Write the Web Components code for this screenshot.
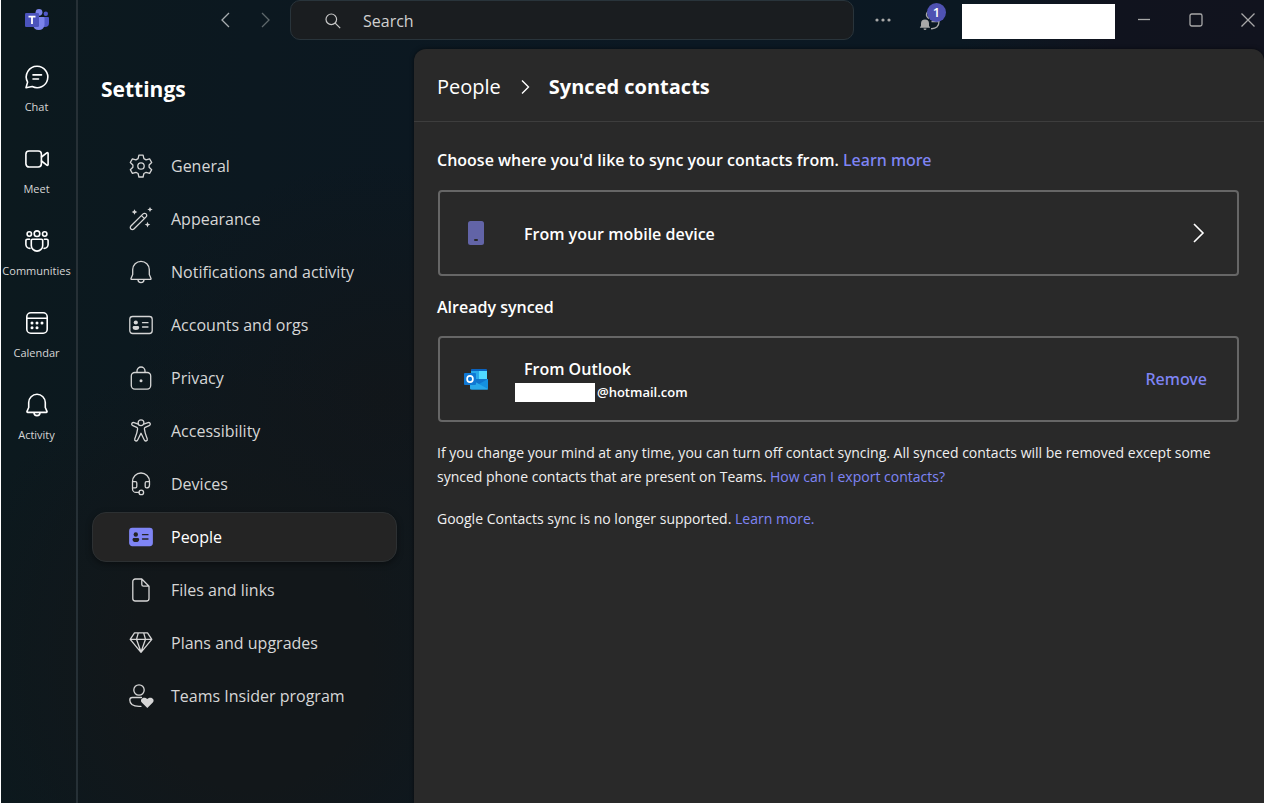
<!DOCTYPE html>
<html lang="en">
<head>
<meta charset="utf-8">
<title>Settings – Synced contacts</title>
<style>
  html, body { height: 100%; margin: 0; background: #fff; }
  body { box-sizing: border-box; padding: 0 6px 8px 1px; font-family: "Open Sans", "Noto Sans", sans-serif; color: #d6d6d6; }
</style>
</head>
<body>
<teams-window>
  <app-rail slot="rail">
    <rail-item icon="chat">Chat</rail-item>
    <rail-item icon="meet">Meet</rail-item>
    <rail-item icon="communities">Communities</rail-item>
    <rail-item icon="calendar">Calendar</rail-item>
    <rail-item icon="bell">Activity</rail-item>
  </app-rail>
  <title-bar slot="bar"></title-bar>
  <settings-nav slot="nav" heading="Settings">
    <nav-item icon="gear">General</nav-item>
    <nav-item icon="wand">Appearance</nav-item>
    <nav-item icon="bell">Notifications and activity</nav-item>
    <nav-item icon="card">Accounts and orgs</nav-item>
    <nav-item icon="lock">Privacy</nav-item>
    <nav-item icon="access">Accessibility</nav-item>
    <nav-item icon="headset">Devices</nav-item>
    <nav-item icon="cardfill" selected>People</nav-item>
    <nav-item icon="file">Files and links</nav-item>
    <nav-item icon="diamond">Plans and upgrades</nav-item>
    <nav-item icon="insider">Teams Insider program</nav-item>
  </settings-nav>
  <contacts-page slot="main"></contacts-page>
</teams-window>

<script>
const ICONS = {
  teams: `<svg viewBox="0 0 24 24" width="24" height="24"><circle cx="20.8" cy="5.8" r="2.2" fill="#5059c9"/><path d="M16 9h7a1 1 0 0 1 1 1v5a4 4 0 0 1-4 4h-2z" fill="#5059c9"/><circle cx="14" cy="4.3" r="3.4" fill="#7b83eb"/><path d="M8 9h10.500a1 1 0 0 1 1 1v7a5.800 5.800 0 0 1-11.500 0z" fill="#7b83eb"/><rect x="0" y="5" width="14" height="14" rx="1.300" fill="#4b53bc"/><path d="M3.500 8.700h7M7 8.700v7.300" stroke="#fff" stroke-width="1.800" fill="none"/></svg>`,
  chat: `<path d="M12.200 1.300a10.700 10.700 0 1 1-5 20.200L1 22.700l1.600-5.600A10.700 10.700 0 0 1 12.200 1.300zM8 9.900h8.500M8 14h5.500"/>`,
  meet: `<rect x=".9" y="4" width="15.500" height="16" rx="3.200"/><path d="M16.500 10l5.300-4.200c.5-.4 1.300-.1 1.300.6v11.200c0 .7-.8 1-1.300.6L16.500 14"/>`,
  communities: `<circle cx="12" cy="4.700" r="2.800"/><circle cx="4.300" cy="5" r="2.200"/><circle cx="19.700" cy="5" r="2.200"/><path d="M7.500 10.200h9c.8 0 1.200.5 1.200 1.200v5a5.700 5.700 0 0 1-11.400 0v-5c0-.7.4-1.200 1.200-1.200zM4.600 10.200H2.200C1.400 10.200.9 10.700.9 11.400V15.500a4 4 0 0 0 4 3.900M19.400 10.200h2.400c.8 0 1.300.5 1.300 1.200V15.500a4 4 0 0 1-4 3.900"/>`,
  calendar: `<rect x="1.800" y="1.800" width="20.400" height="20.400" rx="4"/><path d="M2 7.200h20"/><g fill="currentColor" stroke="none"><circle cx="7" cy="12" r="1.500"/><circle cx="12" cy="12" r="1.500"/><circle cx="17" cy="12" r="1.500"/><circle cx="7" cy="16.800" r="1.500"/><circle cx="12" cy="16.800" r="1.500"/></g>`,
  bell: `<path d="M12 1.300a8.300 8.300 0 0 0-8.300 8.300v4.900L2 18.400c-.2.500.1 1 .7 1h18.600c.6 0 .9-.5.700-1l-1.700-3.900V9.600A8.300 8.300 0 0 0 12 1.300zM9 19.800a3 2.800 0 0 0 6 0"/>`,
  gear: `<path d="M9.900 1.100h4.200l.8 3.500 2.200 1.300 3.500-1 2.100 3.600-2.600 2.500v2.200l2.600 2.500-2.100 3.600-3.500-1-2.200 1.200-.8 3.500H9.900l-.8-3.500-2.200-1.200-3.500 1-2.100-3.600 2.600-2.500V11L1.300 8.500l2.100-3.600 3.500 1 2.200-1.300z"/><circle cx="12" cy="12" r="3.200"/>`,
  wand: `<path d="M1.900 19L14.100 6.900a2.100 2.100 0 0 1 3 3L4.900 22a2.100 2.100 0 0 1-3-3zM12.500 8.600l3 3"/><g fill="currentColor" stroke="none"><path d="M5.500 2.200l.9 1.900 1.900.9-1.900.9-.9 1.900-.9-1.900L2.700 5l1.900-.9zM21 0l.9 1.700 1.800.8-1.800.8L21 5l-.9-1.700-1.800-.8 1.800-.8zM18.500 14.800l.8 2 2 .8-2 .8-.8 2-.8-2-2-.8 2-.8z"/></g>`,
  card: `<rect x=".8" y="3.500" width="22.400" height="17" rx="2.800"/><circle cx="6.800" cy="9.500" r="2.100" fill="currentColor" stroke="none"/><path d="M3.600 14.500c0-.9.600-1.500 1.500-1.500h3.600c.9 0 1.500.6 1.500 1.500 0 1.700-1.300 2.500-3.300 2.500s-3.300-.8-3.300-2.500z" fill="currentColor" stroke="none"/><path d="M13.500 9.700H19M13.500 14H19"/>`,
  cardfill: `<rect x=".8" y="3.500" width="22.400" height="17" rx="2.500" fill="#7f85f5" stroke="#7f85f5"/><circle cx="6.800" cy="9.500" r="2.200" fill="#242424" stroke="none"/><path d="M3.500 14.500c0-.9.600-1.500 1.500-1.500h3.700c.9 0 1.500.6 1.500 1.500 0 1.700-1.300 2.600-3.300 2.600s-3.400-.9-3.400-2.600z" fill="#242424" stroke="none"/><path d="M13.500 9.700H19M13.500 14H19" stroke="#242424"/>`,
  lock: `<rect x="2.300" y="6.500" width="19.400" height="16.600" rx="3.500"/><path d="M8 6.300V5a4 4 0 0 1 8 0v1.300"/><circle cx="12" cy="14.800" r="1.500" fill="currentColor" stroke="none"/>`,
  access: `<circle cx="12" cy="3.700" r="2.900"/><path d="M9.300 5.200L5 3.600c-2.200-.7-3.300 2.200-1.200 3.100l4 1.700c.6.300.9.800.8 1.500-.3 3.800-1.500 6.500-2.800 9.700-.8 2.300 2.100 3.300 3 1.200L12 14.300l3.200 6.500c.9 2.100 3.800 1.100 3-1.200-1.300-3.200-2.500-5.900-2.800-9.700-.1-.7.200-1.200.8-1.500l4-1.700c2.100-.9 1-3.800-1.200-3.100l-4.300 1.600"/>`,
  headset: `<path d="M3.500 9.700V9.500a8.500 8.500 0 0 1 17 0v.2M3.500 9.700h3c.9 0 1.300.5 1.300 1.300v3.600c0 .8-.4 1.300-1.300 1.300h-3zM20.500 9.700h-3c-.9 0-1.300.5-1.300 1.300v3.600c0 .8.400 1.300 1.300 1.300a3 3 0 0 0 3-3zM3.500 15.700v1.200a3.500 3.500 0 0 0 3.500 3.500h3"/><circle cx="12.300" cy="20.400" r="2.300"/>`,
  file: `<path d="M6.300 1h6.500l7.200 7.200v12.300a2.500 2.500 0 0 1-2.500 2.500H6.300a2.500 2.500 0 0 1-2.500-2.500v-17A2.500 2.500 0 0 1 6.300 1zM12.800 1v5.500c0 1 .7 1.700 1.700 1.700H20"/>`,
  diamond: `<path d="M5.500 1.800h13l4.300 6.500L12 21.300 1.200 8.300zM1.500 8.300h21M9.300 1.800L7.500 8.300 12 21l4.500-12.700-1.800-6.500"/>`,
  insider: `<circle cx="10" cy="6" r="5.200"/><path d="M12.500 13.500H3.300A2.500 2.500 0 0 0 .8 16c0 4 3.700 6.300 9.200 6.300h2"/><path d="M18.300 24l-5.500-5.500c-2.700-3.200 2-7 5.500-3.400 3.500-3.600 8.200.2 5.500 3.400z" fill="currentColor" stroke="none"/>`,
  outlook: `<svg viewBox="0 0 24 24" width="24" height="24"><path d="M7 2.500A1 1 0 0 1 8 2h14a1 1 0 0 1 1 1v3H7z" fill="#0a63c0"/><path d="M7 4h8v9H7z" fill="#28a8ea"/><path d="M15 4h8v9h-8z" fill="#50d9ff"/><path d="M7 12h17v8H7z" fill="#0f74cc"/><path d="M24 12v9.500a1 1 0 0 1-1 1H7L15 17z" fill="#1490df"/><path d="M6 12l18 10a1 1 0 0 1-1 .5H7a1 1 0 0 1-1-1z" fill="#28a8ea"/><rect y="6" width="12" height="12" rx="1" fill="#0f78d4"/><ellipse cx="6" cy="12" rx="2.900" ry="3.200" fill="none" stroke="#fff" stroke-width="1.700"/></svg>`,
  phone: `<svg viewBox="0 0 24 24" width="24" height="24"><rect x="4" width="16" height="24" rx="2.500" fill="#6264a7"/><rect x="10" y="18" width="4" height="2" rx="1" fill="#292929"/></svg>`
};
const icon = (name, size = 24, stroke = 1.3) => {
  const body = ICONS[name];
  return body.startsWith('<svg') ? body.replace('<svg', '<svg aria-hidden="true"')
    : `<svg aria-hidden="true" viewBox="0 0 24 24" width="${size}" height="${size}" fill="none" stroke="currentColor" stroke-width="${stroke}" stroke-linejoin="round" stroke-linecap="round">${body}</svg>`;
};
const BASE = `<style>*{box-sizing:border-box} svg{display:block;flex:none;overflow:visible} button{font:inherit;color:inherit;background:none;border:0;padding:0;margin:0} a{color:#7f85f5;text-decoration:none}</style>`;
class Base extends HTMLElement {
  connectedCallback() {
    if (!this.shadowRoot) this.attachShadow({ mode: 'open' }).innerHTML = BASE + this.view();
  }
}

customElements.define('teams-window', class extends Base {
  view() {
    return `<style>
      :host { display: grid; height: 100%; grid-template: 49px minmax(0, 1fr) / 77px 336px minmax(0, 1fr); overflow: hidden;
        background:
          radial-gradient(ellipse 300px 320px at 250px 660px, #12171a 40%, transparent),
          radial-gradient(ellipse 260px 240px at 380px 400px, #11161a, transparent),
          linear-gradient(90deg, #0c191e 0%, #0c1820 20%, #0b1823 55%, #0b1822 76%, #10131e 88%, #11131e 100%); }
      ::slotted([slot=rail]) { grid-row: 1 / 3; }
      ::slotted([slot=bar]) { grid-column: 2 / 4; }
    </style>
    <slot name="rail"></slot><slot name="bar"></slot><slot name="nav"></slot><slot name="main"></slot>`;
  }
});

customElements.define('app-rail', class extends Base {
  view() {
    return `<style>
      :host { display: flex; flex-direction: column; padding-right: 4px; border-right: 2px solid #263036; }
      .logo { display: flex; justify-content: center; padding: 8px 0 23px; }
      nav { display: flex; flex-direction: column; }
    </style>
    <div class="logo">${icon('teams')}</div><nav aria-label="Apps"><slot></slot></nav>`;
  }
});

customElements.define('rail-item', class extends Base {
  view() {
    return `<style>
      :host { display: block; height: 82px; }
      button { display: flex; flex-direction: column; align-items: center; gap: 10px; width: 100%; padding-top: 10px; font-size: 11px; line-height: 16px; }
      svg { color: #fff; }
      span { margin: 0 -4px; white-space: nowrap; }
    </style>
    <button>${icon(this.getAttribute('icon'), 24, 1.6)}<span><slot></slot></span></button>`;
  }
});

customElements.define('title-bar', class extends Base {
  view() {
    return `<style>
      :host { display: flex; align-items: flex-start; min-width: 0; }
      button { display: flex; align-items: center; justify-content: center; height: 40px; width: 40px; }
      .history { display: flex; flex: 0 0 212px; justify-content: flex-end; padding-right: 4px; }
      .history button { color: #a8adb0; }
      .history button + button { color: #5f686c; }
      label { display: flex; align-items: center; gap: 22px; flex: 0 1 564px; min-width: 0; height: 40px; padding: 1px 0 0 34px; border: 1px solid #29343b; border-radius: 10px; background: #1a1d20; color: #c8c8c8; }
      input { flex: 1; min-width: 0; padding: 0; border: 0; outline: 0; background: none; color: inherit; font: inherit; font-size: 16px; line-height: 24px; }
      input::placeholder { color: #d0d0d0; opacity: 1; }
      .tools { display: flex; align-items: flex-start; flex: 1; color: #a8a8a8; }
      .more { margin-left: 9px; }
      .alerts { position: relative; margin-left: 7px; }
      .badge { position: absolute; left: 17px; top: 3px; width: 19px; height: 19px; border-radius: 50%; background: #4f52b2; color: #fff; font-size: 13px; font-weight: 600; line-height: 19px; text-align: center; }
      .account { width: 153px; height: 35px; margin: 4px 0 0 12px; background: #fff; }
      .controls { display: flex; gap: 12px; margin-left: auto; margin-right: -4px; }
    </style>
    <div class="history">
      <button aria-label="Back"><svg width="18" height="18" viewBox="0 0 18 18" fill="none" stroke="currentColor" stroke-width="1.300"><path d="M12 2L5 9l7 7"/></svg></button>
      <button aria-label="Forward"><svg width="18" height="18" viewBox="0 0 18 18" fill="none" stroke="currentColor" stroke-width="1.300"><path d="M5 2l7 7-7 7"/></svg></button>
    </div>
    <label><svg aria-hidden="true" width="16" height="16" viewBox="0 0 16 16" fill="none" stroke="currentColor" stroke-width="1.200"><circle cx="6.300" cy="6.300" r="5.300"/><path d="M10.200 10.200l5 5"/></svg><input type="search" placeholder="Search" aria-label="Search"></label>
    <div class="tools">
      <button class="more" aria-label="More"><svg width="16" height="4" viewBox="0 0 16 4" fill="currentColor"><circle cx="2" cy="2" r="1.600"/><circle cx="8" cy="2" r="1.600"/><circle cx="14" cy="2" r="1.600"/></svg></button>
      <button class="alerts" aria-label="Notifications"><svg width="22" height="22" viewBox="0 0 22 22" fill="none" stroke="currentColor" stroke-width="1.300"><path d="M10 9.500C6 7 7 3 11 2M12.500 12.500H20c0 5-3 7.500-8 7.200"/><path d="M6 10.500a4 4 0 0 0-4 4v2.300L.8 18.800h10.400L10 16.800v-2.300a4 4 0 0 0-4-4zM4.500 19.500a1.500 1.500 0 0 0 3 0z" fill="currentColor" stroke="none"/></svg><span class="badge">1</span></button>
      <div class="account"></div>
      <div class="controls">
        <button aria-label="Minimize"><svg width="12" height="12" viewBox="0 0 12 12" stroke="currentColor" stroke-width="1.300"><path d="M0 5.500h12"/></svg></button>
        <button aria-label="Maximize"><svg width="14" height="14" viewBox="0 0 14 14" fill="none" stroke="currentColor" stroke-width="1.300"><rect x="1" y="1" width="12" height="12" rx="1.800"/></svg></button>
        <button aria-label="Close"><svg width="14" height="14" viewBox="0 0 14 14" stroke="currentColor" stroke-width="1.300"><path d="M.5.500l13 13M13.500.500l-13 13"/></svg></button>
      </div>
    </div>`;
  }
});

customElements.define('settings-nav', class extends Base {
  view() {
    return `<style>
      :host { display: block; padding: 24px 17px 0 14px; min-height: 0; }
      h1 { margin: 0 0 36px; padding-left: 9px; color: #fff; font-size: 21px; line-height: 32px; font-weight: 700; }
      nav { display: flex; flex-direction: column; gap: 3px; }
    </style>
    <h1>${this.getAttribute('heading')}</h1><nav aria-label="Settings"><slot></slot></nav>`;
  }
});

customElements.define('nav-item', class extends Base {
  view() {
    return `<style>
      :host { display: block; }
      button { display: flex; align-items: center; gap: 18px; width: 100%; height: 50px; padding-left: 36px; border: 1px solid transparent; border-radius: 14px; font-size: 16px; line-height: 24px; white-space: nowrap; }
      :host([selected]) button { background: #242424; border-color: #2c3032; color: #fff; box-shadow: 0 2px 6px #0006; }
    </style>
    <button ${this.hasAttribute('selected') ? 'aria-current="page"' : ''}>${icon(this.getAttribute('icon'))}<span><slot></slot></span></button>`;
  }
});

customElements.define('source-card', class extends Base {
  view() {
    return `<style>
      :host { display: flex; align-items: center; height: 86px; padding: 0 30px 0 24px; border: 2px solid #666; border-radius: 4px; color: #fff; }
      .text { flex: 1; padding: 2px 0 0 27px; }
      h3 { margin: 0; padding-left: 9px; font-size: 16px; line-height: 22px; font-weight: 600; }
    </style>
    ${icon(this.getAttribute('icon'))}
    <div class="text"><h3>${this.getAttribute('label')}</h3><slot></slot></div><slot name="action"></slot>`;
  }
});

customElements.define('contacts-page', class extends Base {
  view() {
    return `<style>
      :host { display: block; min-width: 0; border-radius: 12px 12px 0 0; background: #292929; color: #f0f0f0; box-shadow: 0 0 4px #0008; font-size: 14px; line-height: 24px; }
      header { display: flex; align-items: center; gap: 20px; height: 73px; padding: 4px 24px 0 23px; border-bottom: 1px solid #3d3d3d; color: #fff; font-size: 20px; line-height: 28px; }
      header a { color: #fff; }
      header h1 { margin: 0; font-size: 20px; font-weight: 700; }
      .body { padding: 26px 25px 0 23px; }
      h2, p { margin: 0; }
      h2 { color: #fff; font-size: 16px; line-height: 24px; font-weight: 600; }
      h2 a, .remove { font-family: "Noto Sans", sans-serif; font-weight: 500; }
      source-card { margin: 18px 0 19px 1px; }
      h2 + source-card.synced { margin-top: 17px; }
      p + p { margin-top: 18px; }
      .mail { display: flex; align-items: center; gap: 2px; margin-top: 2px; font-size: 13px; line-height: 20px; font-weight: 600; }
      .mask { width: 80px; height: 19px; background: #fff; }
      .remove { color: #7f85f5; font-size: 16px; line-height: 24px; }
    </style>
    <header><a href="#people">People</a><svg aria-hidden="true" width="8" height="16" viewBox="0 0 8 16" fill="none" stroke="currentColor" stroke-width="1.400"><path d="M1 1.500L7.500 8 1 14.500"/></svg><h1>Synced contacts</h1></header>
    <div class="body">
      <h2>Choose where you'd like to sync your contacts from. <a href="#sync">Learn more</a></h2>
      <source-card icon="phone" label="From your mobile device">
        <button slot="action" aria-label="Open"><svg width="18" height="22" viewBox="0 0 18 22" fill="none" stroke="#fff" stroke-width="1.600"><path d="M5 2l9 9-9 9"/></svg></button>
      </source-card>
      <h2>Already synced</h2>
      <source-card class="synced" icon="outlook" label="From Outlook">
        <div class="mail"><span class="mask"></span><span>@hotmail.com</span></div>
        <button slot="action" class="remove">Remove</button>
      </source-card>
      <p>If you change your mind at any time, you can turn off contact syncing. All synced contacts will be removed except some synced phone contacts that are present on Teams. <a href="#export">How can I export contacts?</a></p>
      <p>Google Contacts sync is no longer supported. <a href="#google">Learn more.</a></p>
    </div>`;
  }
});
</script>
</body>
</html>
